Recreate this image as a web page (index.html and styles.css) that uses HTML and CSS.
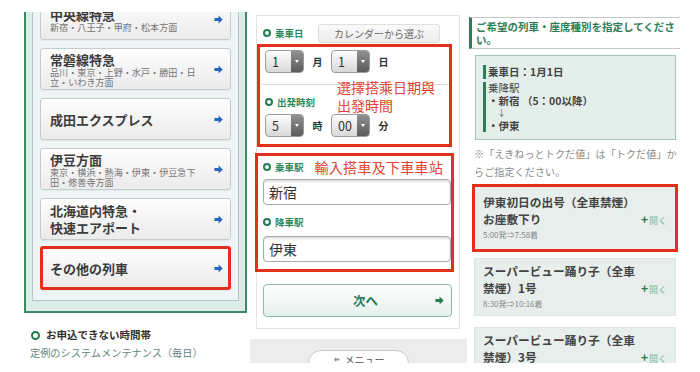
FILE: index.html
```html
<!DOCTYPE html>
<html lang="ja">
<head>
    <meta charset="UTF-8">
    <meta name="viewport" content="width=device-width, initial-scale=1.0">
    <title>えきねっと 予約の流れ</title>
    <link rel="stylesheet" href="styles.css">
</head>
<body>
    <div class="shots">

        <!-- 1. 列車の種類を選ぶ -->
        <div class="shot shot-routes">
            <div class="route-frame">
                <div class="route-list">
                    <a class="route">
                        <span class="route-text">
                            <span class="route-name">中央線特急</span>
                            <span class="route-sub">新宿・八王子・甲府・松本方面</span>
                        </span>
                        <svg class="go" viewBox="0 0 10 10"><path d="M0.5 3.3h4.6V0.6L9.7 5 5.1 9.4V6.7H0.5z"/></svg>
                    </a>
                    <a class="route">
                        <span class="route-text">
                            <span class="route-name">常磐線特急</span>
                            <span class="route-sub">品川・東京・上野・水戸・勝田・日立・いわき方面</span>
                        </span>
                        <svg class="go" viewBox="0 0 10 10"><path d="M0.5 3.3h4.6V0.6L9.7 5 5.1 9.4V6.7H0.5z"/></svg>
                    </a>
                    <a class="route">
                        <span class="route-text">
                            <span class="route-name">成田エクスプレス</span>
                        </span>
                        <svg class="go" viewBox="0 0 10 10"><path d="M0.5 3.3h4.6V0.6L9.7 5 5.1 9.4V6.7H0.5z"/></svg>
                    </a>
                    <a class="route">
                        <span class="route-text">
                            <span class="route-name">伊豆方面</span>
                            <span class="route-sub">東京・横浜・熱海・伊東・伊豆急下田・修善寺方面</span>
                        </span>
                        <svg class="go" viewBox="0 0 10 10"><path d="M0.5 3.3h4.6V0.6L9.7 5 5.1 9.4V6.7H0.5z"/></svg>
                    </a>
                    <a class="route">
                        <span class="route-text">
                            <span class="route-name tall">北海道内特急・<br>快速エアポート</span>
                        </span>
                        <svg class="go" viewBox="0 0 10 10"><path d="M0.5 3.3h4.6V0.6L9.7 5 5.1 9.4V6.7H0.5z"/></svg>
                    </a>
                    <a class="route marked">
                        <span class="route-text">
                            <span class="route-name">その他の列車</span>
                        </span>
                        <svg class="go" viewBox="0 0 10 10"><path d="M0.5 3.3h4.6V0.6L9.7 5 5.1 9.4V6.7H0.5z"/></svg>
                    </a>
                </div>
            </div>

            <div class="notice">
                <h3 class="notice-title"><span class="dot"></span>お申込できない時間帯</h3>
                <p class="notice-text">定例のシステムメンテナンス（毎日）</p>
                <p class="notice-text">23:40～翌5:30頃</p>
            </div>
        </div>

        <!-- 2. 乗車日・駅を入力 -->
        <div class="shot shot-form">
            <div class="form-card">
                <div class="field-head">
                    <span class="dot"></span><span class="label">乗車日</span>
                    <button class="cal-btn">カレンダーから選ぶ</button>
                </div>

                <div class="marker pick">
                    <div class="select-row">
                        <span class="select"><span class="select-val">1</span><span class="select-btn"><i></i></span></span>
                        <span class="unit">月</span>
                        <span class="select"><span class="select-val">1</span><span class="select-btn"><i></i></span></span>
                        <span class="unit">日</span>
                    </div>
                    <div class="pick-rule"></div>
                    <div class="field-head small">
                        <span class="dot"></span><span class="label">出発時刻</span>
                    </div>
                    <div class="select-row gap">
                        <span class="select"><span class="select-val">5</span><span class="select-btn"><i></i></span></span>
                        <span class="unit">時</span>
                        <span class="select"><span class="select-val">00</span><span class="select-btn"><i></i></span></span>
                        <span class="unit">分</span>
                    </div>
                    <p class="memo memo-date">選擇搭乘日期與出發時間</p>
                </div>

                <div class="marker stations">
                    <div class="field-head station-head">
                        <span class="dot"></span><span class="label">乗車駅</span>
                        <span class="memo memo-inline">輸入搭車及下車車站</span>
                    </div>
                    <input class="station-input" type="text" value="新宿">
                    <div class="field-head small arrive-head">
                        <span class="dot"></span><span class="label">降車駅</span>
                    </div>
                    <input class="station-input second" type="text" value="伊東">
                </div>

                <button class="next-btn">
                    <span class="next-text">次へ</span>
                    <svg class="go green" viewBox="0 0 10 10"><path d="M0.5 3.3h4.6V0.6L9.7 5 5.1 9.4V6.7H0.5z"/></svg>
                </button>
            </div>

            <div class="menu-bar">
                <span class="menu-pill">
                    <svg class="menu-icon" viewBox="0 0 10 10"><path d="M1 5l3.5-3.5v2.2H9v2.6H4.5v2.2z"/></svg>
                    メニュー
                </span>
            </div>
        </div>

        <!-- 3. 列車を選ぶ -->
        <div class="shot shot-trains">
            <h2 class="section-title">ご希望の列車・座席種別を指定してください。</h2>

            <div class="trip-box">
                <div class="trip-item first">乗車日：1月1日</div>
                <div class="trip-item">
                    <div class="trip-label">乗降駅</div>
                    <div>・新宿 （5：00以降）</div>
                    <div class="trip-down">↓</div>
                    <div>・伊東</div>
                </div>
            </div>

            <p class="fare-note">※「えきねっとトクだ値」は「トクだ値」からご指定ください。</p>

            <div class="trains">
                <div class="train marked">
                    <div class="train-info">
                        <div class="train-name">伊東初日の出号（全車禁煙）お座敷下り</div>
                        <div class="train-time">5:00発⇒7:58着</div>
                    </div>
                    <span class="train-toggle"><b>+</b>開く</span>
                </div>
                <div class="train">
                    <div class="train-info">
                        <div class="train-name">スーパービュー踊り子（全車禁煙）1号</div>
                        <div class="train-time">8:30発⇒10:16着</div>
                    </div>
                    <span class="train-toggle"><b>+</b>開く</span>
                </div>
                <div class="train">
                    <div class="train-info">
                        <div class="train-name">スーパービュー踊り子（全車禁煙）3号</div>
                        <div class="train-time">9:30発⇒11:18着</div>
                    </div>
                    <span class="train-toggle"><b>+</b>開く</span>
                </div>
            </div>
        </div>

    </div>
</body>
</html>
```

FILE: styles.css
```css
* {
    margin: 0;
    padding: 0;
    box-sizing: border-box;
}

body {
    font-family: "Noto Sans CJK JP", "Noto Sans", sans-serif;
    background: #fff;
    color: #333;
}

.shots {
    display: flex;
    height: 363px;
    overflow: hidden;
}

.shot {
    height: 100%;
    overflow: hidden;
}

/* ---------- shot 1 ---------- */

.shot-routes {
    width: 223px;
    margin: 12px 0 0 24px;
    height: 351px;
}

.route-frame {
    margin-top: -32px;
    border: 2px solid #3a8b64;
    background: #dcede7;
    padding: 7px 6px 10px;
}

.route-list {
    border: 1px solid #b6c7ce;
    background: #eef5f4;
    padding: 8px 7px 10px;
}

.route {
    display: flex;
    align-items: center;
    justify-content: space-between;
    min-height: 42px;
    padding: 0 7px 0 9px;
    border: 1px solid #c6cbce;
    border-radius: 3px;
    background: linear-gradient(#fefefe, #ebebeb);
    box-shadow: 0 1px 1px rgba(0, 0, 0, 0.05);
}

.route + .route {
    margin-top: 8px;
}

.route.marked {
    min-height: 44px;
    margin-top: 6px;
    border: 3px solid #e2301c;
    padding: 0 5px 0 7px;
}

.route-text {
    width: 150px;
    display: flex;
    flex-direction: column;
}

.route-name {
    font-size: 13px;
    font-weight: bold;
    line-height: 15px;
    color: #3c3c3c;
}

.route-name.tall {
    line-height: 17px;
}

.route-sub {
    font-size: 9.1px;
    line-height: 10px;
    color: #747474;
}

.go {
    width: 9px;
    height: 9px;
    fill: #2765bf;
    flex-shrink: 0;
}

.go.green {
    fill: #2b7a52;
}

.dot {
    display: inline-block;
    width: 8px;
    height: 8px;
    border-radius: 50%;
    border: 2.5px solid #1f7d52;
    background: #fff;
    margin-right: 4px;
    flex-shrink: 0;
}

.notice {
    margin: 15px 0 0 6px;
}

.notice-title {
    display: flex;
    align-items: center;
    font-size: 10.5px;
    line-height: 14px;
    font-weight: bold;
    color: #333;
}

.notice-title .dot {
    width: 9px;
    height: 9px;
    margin: 0 6px 0 1px;
}

.notice-text {
    font-size: 10.2px;
    line-height: 17px;
    color: #5f877b;
    margin-top: 2px;
}

.notice-text + .notice-text {
    margin-top: 0;
    color: #9db3ad;
}

/* ---------- shot 2 ---------- */

.shot-form {
    width: 217px;
    margin-left: 3px;
    display: flex;
    flex-direction: column;
}

.form-card {
    margin: 15px 7px 0 6px;
    border: 1px solid #e2e2e2;
    padding: 7px 7px 11px 6px;
    background: #fff;
}

.field-head {
    display: flex;
    align-items: center;
    height: 20px;
}

.field-head.small {
    height: 14px;
    margin-top: 10px;
}

.label {
    font-size: 9.5px;
    font-weight: bold;
    color: #2a8a5c;
}

.cal-btn {
    margin: 0 12px 0 auto;
    width: 122px;
    height: 19px;
    border: 1px solid #dedede;
    border-radius: 3px;
    background: linear-gradient(#fafafa, #ececec);
    font-family: inherit;
    font-size: 10px;
    color: #666;
}

.marker {
    border: 3px solid #e2301c;
    position: relative;
}

.pick {
    margin: 1px 0 0 -6px;
    padding: 3px 0 7px 5px;
}

.select-row {
    display: flex;
    align-items: center;
    height: 23px;
}

.select-row.gap {
    margin-top: 5px;
}

.select {
    display: flex;
    width: 39px;
    height: 23px;
    border: 1px solid #9b9b9b;
    border-radius: 4px;
    overflow: hidden;
    background: linear-gradient(#fdfdfd, #d8d8d8);
}

.select-val {
    flex: 1;
    padding-left: 6px;
    font-size: 12.5px;
    line-height: 21px;
    color: #333;
}

.select-btn {
    width: 12px;
    display: flex;
    align-items: center;
    justify-content: center;
    background: linear-gradient(#909090, #5c5c5c);
}

.select-btn i {
    width: 0;
    height: 0;
    border-left: 2.5px solid transparent;
    border-right: 2.5px solid transparent;
    border-top: 3px solid #fff;
}

.unit {
    width: 27px;
    text-align: center;
    font-size: 10px;
    font-weight: bold;
    color: #333;
}

.pick-rule {
    border-top: 1px solid #dcdcdc;
    margin: 11px 0 0 -3px;
}

.memo {
    font-family: "Noto Sans CJK TC", "Noto Sans CJK JP", sans-serif;
    font-size: 14px;
    color: #e2442f;
    font-weight: normal;
}

.memo-date {
    position: absolute;
    left: 77px;
    top: 31px;
    width: 100px;
    line-height: 18px;
}

.stations {
    margin: 6px -2px 0 -8px;
    padding: 2px 0 7px 5px;
}

.station-head {
    height: 18px;
}

.memo-inline {
    margin-left: 11px;
    letter-spacing: 0.3px;
    line-height: 18px;
}

.station-input {
    display: block;
    width: 100%;
    height: 26px;
    margin-top: 3px;
    padding-left: 5px;
    border: 1px solid #a9a9a9;
    border-radius: 4px;
    box-shadow: inset 0 2px 2px rgba(0, 0, 0, 0.12);
    font-family: inherit;
    font-size: 14px;
    color: #333;
    background: #fff;
}

.arrive-head {
    margin-top: 11px;
}

.station-input.second {
    margin-top: 7px;
}

.next-btn {
    display: flex;
    align-items: center;
    width: 100%;
    height: 33px;
    margin-top: 12px;
    padding: 0 7px 0 0;
    border: 1px solid #8dbca6;
    border-radius: 4px;
    background: linear-gradient(#ffffff, #e5f0eb);
    font-family: inherit;
}

.next-text {
    flex: 1;
    padding-left: 32px;
    text-align: center;
    font-size: 12.5px;
    font-weight: bold;
    color: #2b7a55;
}

.menu-bar {
    flex: 1;
    display: flex;
    justify-content: center;
    align-items: flex-start;
    margin-top: 10px;
    padding-top: 11px;
    background: #ececec;
}

.menu-pill {
    display: flex;
    align-items: flex-start;
    justify-content: center;
    gap: 5px;
    width: 101px;
    height: 26px;
    padding-top: 2px;
    border: 1px solid #c8c8c8;
    border-radius: 13px;
    background: #fff;
    font-size: 10px;
    line-height: 13px;
    color: #555;
}

.menu-icon {
    width: 7px;
    height: 7px;
    margin-top: 3px;
    fill: #999;
}

/* ---------- shot 3 ---------- */

.shot-trains {
    width: 211px;
    margin-left: 2px;
}

.section-title {
    margin-top: 17px;
    border-top: 1px solid #c6c6c6;
    border-bottom: 1px solid #c6c6c6;
    border-left: 3px solid #2f7d57;
    padding: 2px 0 2px 4px;
    font-size: 10.5px;
    line-height: 13px;
    font-weight: bold;
    color: #2e7d5b;
}

.trip-box {
    margin: 6px 4px 0 6px;
    border: 1px solid #a3c7b7;
    background: #e4efeb;
    padding: 9px 7px 7px;
}

.trip-item {
    border-left: 3px solid #2f7d57;
    padding-left: 2px;
    font-size: 10.5px;
    line-height: 12.5px;
    font-weight: bold;
    color: #444;
}

.trip-item.first {
    line-height: 14px;
    margin-bottom: 3px;
}

.trip-label {
    font-weight: normal;
}

.trip-down {
    padding-left: 9px;
    font-weight: normal;
    font-size: 9px;
    color: #666;
}

.fare-note {
    width: 206px;
    margin: 5px 0 0 5px;
    font-size: 10px;
    letter-spacing: 0.15px;
    line-height: 18px;
    color: #8a8a8a;
}

.trains {
    margin: 3px 4px 0 5px;
}

.train {
    display: flex;
    align-items: flex-start;
    border: 1px solid #dde4e1;
    background: #e7eeeb;
    padding: 3px 8px 3px 8px;
}

.train + .train {
    margin-top: 11px;
}

.train.marked {
    margin: 0 -2px -5px;
    border: 3px solid #e2301c;
    padding: 6px 8px 6px 8px;
}

.train-info {
    width: 156px;
}

.train-name {
    font-size: 11.7px;
    line-height: 17px;
    font-weight: bold;
    color: #444;
}

.train-time {
    font-size: 8px;
    line-height: 16px;
    color: #888;
}

.train-toggle {
    margin-left: auto;
    padding-top: 17px;
    line-height: 17px;
    font-size: 9px;
    color: #7db99c;
    white-space: nowrap;
}

.train-toggle b {
    font-size: 12px;
    color: #2b7a52;
    margin-right: 1px;
}
```
